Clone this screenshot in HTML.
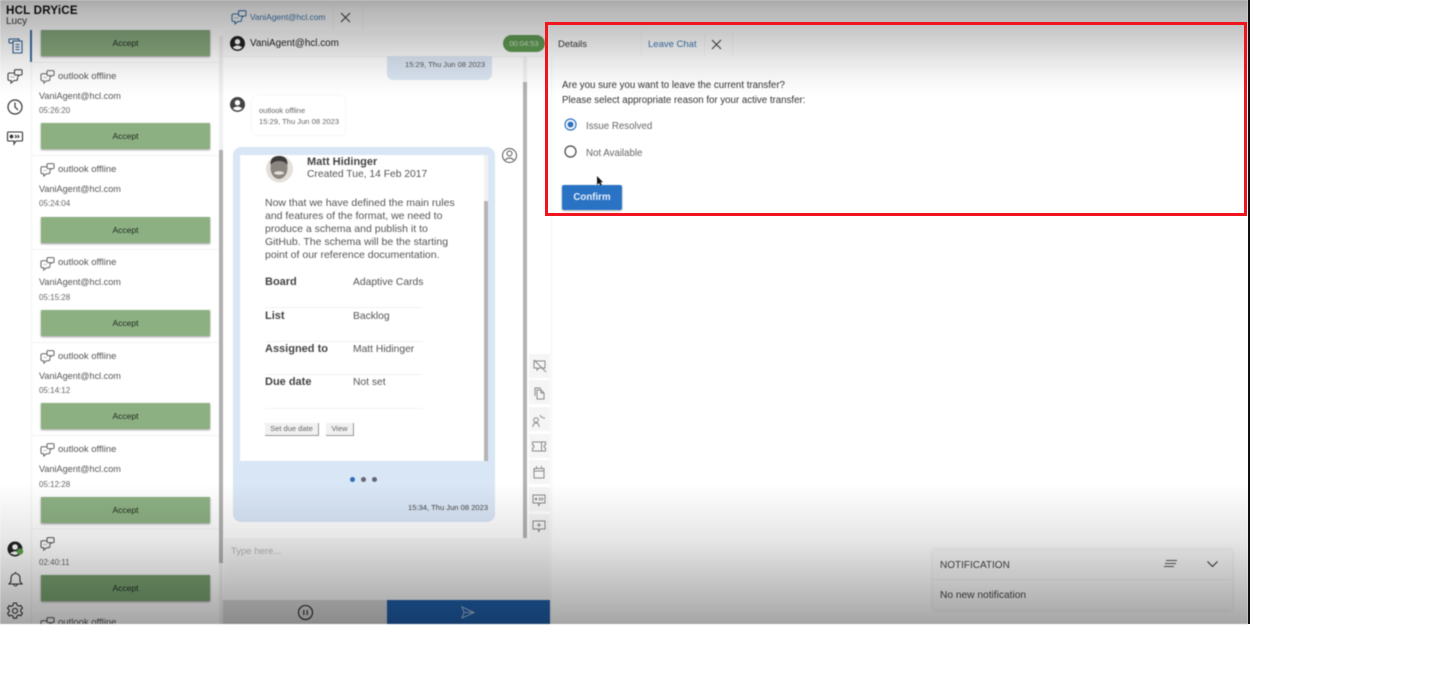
<!DOCTYPE html>
<html><head><meta charset="utf-8"><style>
html,body{margin:0;padding:0;background:#fff}
body{width:1431px;height:679px;overflow:hidden;position:relative;font-family:"Liberation Sans",sans-serif;color:#333}
#app{position:absolute;left:0;top:0;width:1248px;height:624px;overflow:hidden;background:#fff;filter:blur(.5px)}
.a{position:absolute;white-space:nowrap}
.t1{font-size:9.5px;color:#555}
.t2{font-size:9.1px;color:#555}
.t3{font-size:8px;color:#666}
.acc{position:absolute;left:41px;width:169px;height:26px;background:#8db083;box-shadow:0 1px 2px rgba(0,0,0,.4);font-size:8.5px;color:#1e2b1e;text-align:center;line-height:27px}
.sep{position:absolute;left:32px;width:187px;height:1px;background:#f3f3f3}
svg{position:absolute;overflow:visible;fill:none}
.tb{position:absolute;left:529px;width:21px;height:24px;background:#f5f5f6}
.card{font-size:10.5px;color:#555}
.v{font-size:10.3px}
.b{font-size:11px;font-weight:bold;color:#444}
.hr{position:absolute;left:265px;width:158px;height:1px;background:#f2f2f2}
.mini{position:absolute;top:423px;height:12px;background:#f1f1f1;border-right:1px solid #999;border-bottom:1px solid #999;font-size:7.5px;color:#666;line-height:12px;text-align:center}
</style></head><body>
<svg width="0" height="0" style="position:absolute"><defs>
<symbol id="chat" viewBox="0 0 16 15"><path d="M7 4H2.500Q1 4 1 5.500V10Q1 11.500 2.500 11.500H4V14L7 11.500H9Q10.500 11.500 10.500 10V8.500" stroke="currentColor" stroke-width="1.100" fill="none"/><path d="M7.500 1.500Q7.500 .7 8.500 .7H14Q15 .7 15 1.700V5Q15 6 14 6H12.500L11 7.500V6H8.500Q7.500 6 7.500 5Z" stroke="currentColor" stroke-width="1.100" fill="none"/><path d="M4 8h.8M6 8h.8" stroke="currentColor"/></symbol>
</defs></svg>
<div id="app">
<!-- header/logo -->
<div class="a" style="left:6px;top:4px;font-size:11.6px;font-weight:bold;color:#111;letter-spacing:.2px">HCL DRYiCE</div>
<div class="a" style="left:6px;top:16px;font-size:10px;color:#333">Lucy</div>
<div class="a" style="left:31px;top:30px;width:1px;height:594px;background:#f2f2f2"></div>
<div class="a" style="left:30px;top:30px;width:2px;height:32px;background:#3c6a9c"></div>
<!-- nav icons -->
<svg style="left:8px;top:38px" width="15" height="16" viewBox="0 0 15 16" stroke="#2a5f96" stroke-width="1.100"><path d="M1 1h10v2M5 3h9v12H5zM1 1v3q0 1 1 1h3M7.500 6.500h4M7.500 9h4M7.500 11.500h4"/></svg>
<svg style="left:7px;top:69px;color:#444" width="16" height="15"><use href="#chat"/></svg>
<svg style="left:7px;top:99px" width="16" height="16" viewBox="0 0 16 16" stroke="#333" stroke-width="1.200"><circle cx="8" cy="8" r="7"/><path d="M8 3.500V8l3 3"/></svg>
<svg style="left:7px;top:131px" width="16" height="15" viewBox="0 0 16 15" stroke="#333" stroke-width="1.100"><path d="M1.500 1h13q1 0 1 1v7q0 1-1 1H9l-2 3v-3H1.500q-1 0-1-1V2q0-1 1-1z"/><circle cx="4.500" cy="5.500" r="1.300" fill="#333"/><path d="M8 4l1.500 1.500L8 7M10.500 4L12 5.500 10.500 7"/></svg>
<svg style="left:7px;top:541px" width="16" height="16" viewBox="0 0 16 16"><circle cx="8" cy="8" r="7.500" fill="#222"/><circle cx="8" cy="6" r="2.800" fill="#fff"/><path d="M3 12.500Q8 8 13 12.500L8 14z" fill="#fff"/><circle cx="13" cy="10.500" r="3.200" fill="#5da14d"/></svg>
<svg style="left:8px;top:571px" width="15" height="17" viewBox="0 0 15 17" stroke="#333" stroke-width="1.100"><path d="M1 13h13l-2-2.500V7A4.500 4.500 0 0 0 3 7v3.500zM7.500 1v1.500M5.500 13.500q2 3 4 0"/></svg>
<svg style="left:7px;top:602px" width="16" height="17" viewBox="0 0 16 17" stroke="#333" stroke-width="1.100"><path d="M6.500 1h3l.5 2.200 1.800 1 2.100-.7 1.500 2.600-1.600 1.500v2l1.600 1.500-1.500 2.600-2.100-.7-1.800 1-.5 2.200h-3L6 14.200l-1.800-1-2.100.7L.6 11.300l1.600-1.500v-2L.6 6.300l1.500-2.600 2.100.7 1.800-1z"/><circle cx="8" cy="8.800" r="2.500"/></svg>

<!-- left list -->
<div class="acc" style="top:30px;height:26px;background:#86a87d">Accept</div>
<div class="sep" style="top:62px"></div>
<svg style="left:40px;top:70px;color:#666" width="15" height="14"><use href="#chat"/></svg>
<div class="a t1" style="left:58px;top:71px">outlook offline</div>
<div class="a t2" style="left:39px;top:91px">VaniAgent@hcl.com</div>
<div class="a t3" style="left:39px;top:106px">05:26:20</div>
<div class="acc" style="top:123px">Accept</div>
<div class="sep" style="top:155px"></div>
<svg style="left:40px;top:163px;color:#666" width="15" height="14"><use href="#chat"/></svg>
<div class="a t1" style="left:58px;top:164px">outlook offline</div>
<div class="a t2" style="left:39px;top:184px">VaniAgent@hcl.com</div>
<div class="a t3" style="left:39px;top:199px">05:24:04</div>
<div class="acc" style="top:217px">Accept</div>
<div class="sep" style="top:249px"></div>
<svg style="left:40px;top:257px;color:#666" width="15" height="14"><use href="#chat"/></svg>
<div class="a t1" style="left:58px;top:257px">outlook offline</div>
<div class="a t2" style="left:39px;top:277px">VaniAgent@hcl.com</div>
<div class="a t3" style="left:39px;top:293px">05:15:28</div>
<div class="acc" style="top:310px">Accept</div>
<div class="sep" style="top:342px"></div>
<svg style="left:40px;top:350px;color:#666" width="15" height="14"><use href="#chat"/></svg>
<div class="a t1" style="left:58px;top:351px">outlook offline</div>
<div class="a t2" style="left:39px;top:371px">VaniAgent@hcl.com</div>
<div class="a t3" style="left:39px;top:386px">05:14:12</div>
<div class="acc" style="top:403px">Accept</div>
<div class="sep" style="top:435px"></div>
<svg style="left:40px;top:443px;color:#666" width="15" height="14"><use href="#chat"/></svg>
<div class="a t1" style="left:58px;top:444px">outlook offline</div>
<div class="a t2" style="left:39px;top:464px">VaniAgent@hcl.com</div>
<div class="a t3" style="left:39px;top:480px">05:12:28</div>
<div class="acc" style="top:497px">Accept</div>
<div class="sep" style="top:528px"></div>
<svg style="left:40px;top:537px;color:#555" width="15" height="14"><use href="#chat"/></svg>
<div class="a t3" style="left:39px;top:558px">02:40:11</div>
<div class="acc" style="top:575px;background:#78a070">Accept</div>
<svg style="left:40px;top:617px;color:#555" width="15" height="14"><use href="#chat"/></svg>
<div class="a t1" style="left:58px;top:617px">outlook offline</div>
<div class="a" style="left:219px;top:36px;width:4px;height:588px;background:#f0f0f0"></div>
<div class="a" style="left:219px;top:150px;width:4px;height:413px;background:#b0b0b0"></div>

<!-- chat tab -->
<svg style="left:231px;top:10px;color:#3f78b0" width="16" height="15"><use href="#chat"/></svg>
<div class="a" style="left:250px;top:12px;font-size:8.4px;color:#3f78b0">VaniAgent@hcl.com</div>
<div class="a" style="left:333px;top:6px;width:28px;height:24px;border-left:1px solid #f2f2f2;border-right:1px solid #f2f2f2"></div>
<svg style="left:341px;top:13px" width="9" height="9" stroke="#444" stroke-width="1.100"><path d="M0 0l9 9M9 0L0 9"/></svg>
<div class="a" style="left:223px;top:31px;width:322px;height:25px;background:#fcfcfc;box-shadow:0 1px 1px rgba(0,0,0,.05)"></div>
<svg style="left:230px;top:36px" width="15" height="15" viewBox="0 0 15 15"><circle cx="7.500" cy="7.500" r="7.500" fill="#222"/><circle cx="7.500" cy="5.700" r="2.700" fill="#fff"/><path d="M2.800 11.500Q7.500 7.500 12.200 11.500Q7.500 15.500 2.800 11.500z" fill="#fff"/></svg>
<div class="a" style="left:250px;top:38px;font-size:9.900px;color:#222">VaniAgent@hcl.com</div>
<div class="a" style="left:503px;top:35px;width:42px;height:17px;border-radius:9px;background:#5f9a53;color:#cfe2ca;font-size:7.500px;text-align:center;line-height:17px">00:04:53</div>

<!-- chat area -->
<div class="a" style="left:523px;top:56px;width:4px;height:482px;background:#f2f2f2"></div>
<div class="a" style="left:523px;top:82px;width:4px;height:456px;background:#b2b2b2"></div>
<div class="a" style="left:387px;top:56px;width:105px;height:24px;background:#dbe6f3;border-radius:0 0 6px 6px"></div>
<div class="a" style="left:405px;top:60px;font-size:7.600px;color:#555">15:29, Thu Jun 08 2023</div>
<svg style="left:230px;top:97px" width="15" height="15" viewBox="0 0 15 15"><circle cx="7.500" cy="7.500" r="7.500" fill="#444"/><circle cx="7.500" cy="5.700" r="2.700" fill="#fff"/><path d="M2.800 11.500Q7.500 7.500 12.200 11.500Q7.500 15.500 2.800 11.500z" fill="#fff"/></svg>
<div class="a" style="left:252px;top:96px;width:93px;height:39px;background:#fff;border-radius:5px;box-shadow:0 0 3px rgba(0,0,0,.08)"></div>
<div class="a" style="left:259px;top:106px;font-size:7.500px;color:#666">outlook offline</div>
<div class="a" style="left:259px;top:117px;font-size:7.600px;color:#666">15:29, Thu Jun 08 2023</div>

<div class="a" style="left:233px;top:147px;width:262px;height:375px;background:#d9e6f6;border-radius:8px"></div>
<div class="a" style="left:240px;top:155px;width:248px;height:306px;background:#fff"></div>
<div class="a" style="left:484px;top:155px;width:4px;height:306px;background:#f2f2f2"></div>
<div class="a" style="left:484px;top:201px;width:4px;height:260px;background:#b5b5b5"></div>
<svg style="left:502px;top:148px" width="15" height="15" viewBox="0 0 15 15" stroke="#555" stroke-width="1"><circle cx="7.500" cy="7.500" r="7"/><circle cx="7.500" cy="5.500" r="2.500"/><path d="M3 12q4.500-4 9 0"/></svg>
<svg style="left:266px;top:155px" width="27" height="28" viewBox="0 0 27 28"><circle cx="13.500" cy="14" r="13.500" fill="#e2e0d8"/><ellipse cx="13" cy="13" rx="8.500" ry="11" fill="#8b8580"/><path d="M4.500 10Q4 1 13 1T21.500 10Q19 6 13 6T4.500 10z" fill="#3c3a38"/><ellipse cx="13" cy="18" rx="5" ry="1.800" fill="#e2e0da"/></svg>
<div class="a card b" style="left:307px;top:156px">Matt Hidinger</div>
<div class="a card v" style="left:307px;top:169px">Created Tue, 14 Feb 2017</div>
<div class="a card" style="left:265px;top:197px;line-height:13px">Now that we have defined the main rules<br>and features of the format, we need to<br>produce a schema and publish it to<br>GitHub. The schema will be the starting<br>point of our reference documentation.</div>
<div class="a card b" style="left:265px;top:276px">Board</div><div class="a card v" style="left:353px;top:277px">Adaptive Cards</div>
<div class="hr" style="top:307px"></div>
<div class="a card b" style="left:265px;top:310px">List</div><div class="a card v" style="left:353px;top:311px">Backlog</div>
<div class="hr" style="top:341px"></div>
<div class="a card b" style="left:265px;top:343px">Assigned to</div><div class="a card v" style="left:353px;top:344px">Matt Hidinger</div>
<div class="hr" style="top:374px"></div>
<div class="a card b" style="left:265px;top:376px">Due date</div><div class="a card v" style="left:353px;top:377px">Not set</div>
<div class="hr" style="top:408px"></div>
<div class="mini" style="left:265px;width:53px">Set due date</div>
<div class="mini" style="left:326px;width:27px">View</div>
<div class="a" style="left:350px;top:477px;width:5px;height:5px;border-radius:50%;background:#2f6cb4"></div>
<div class="a" style="left:361px;top:477px;width:5px;height:5px;border-radius:50%;background:#667"></div>
<div class="a" style="left:372px;top:477px;width:5px;height:5px;border-radius:50%;background:#667"></div>
<div class="a" style="left:408px;top:503px;font-size:7.600px;color:#444">15:34, Thu Jun 08 2023</div>

<!-- side toolbar -->
<div class="tb" style="top:354px"></div><div class="tb" style="top:380px"></div><div class="tb" style="top:407px"></div><div class="tb" style="top:434px"></div><div class="tb" style="top:460px"></div><div class="tb" style="top:487px"></div><div class="tb" style="top:514px"></div>
<svg style="left:533px;top:360px" width="13" height="12" viewBox="0 0 13 12" stroke="#888" stroke-width="1"><path d="M1 1h11v7H6l-2 2V8H1zM1 0l12 12"/></svg>
<svg style="left:534px;top:387px" width="11" height="13" viewBox="0 0 11 13" stroke="#888" stroke-width="1"><path d="M1 9V1h5l1 1M3 3h4l3 3v6H3zM7 3v3h3"/></svg>
<svg style="left:532px;top:413px" width="14" height="14" viewBox="0 0 14 14" stroke="#888" stroke-width="1"><circle cx="4" cy="7" r="2.300"/><path d="M1 14q0-4 3-4t3 4M8 2q1 3 5 3"/></svg>
<svg style="left:532px;top:441px" width="14" height="11" viewBox="0 0 14 11" stroke="#888" stroke-width="1"><path d="M.5 1h13v3a1.500 1.500 0 0 0 0 3v3H.5V7a1.500 1.500 0 0 0 0-3zM9.500 1v9"/></svg>
<svg style="left:533px;top:466px" width="12" height="13" viewBox="0 0 12 13" stroke="#888" stroke-width="1"><path d="M1 2.500h10V12H1zM1 5h10M3.500 0v3M8.500 0v3"/></svg>
<svg style="left:532px;top:494px" width="14" height="13" viewBox="0 0 14 13" stroke="#888" stroke-width="1"><path d="M1 1h12v8H8l-1.500 3V9H1z"/><circle cx="4" cy="5" r=".8" fill="#888"/><path d="M7 3.500L8.500 5 7 6.500M9.500 3.500L11 5 9.500 6.500"/></svg>
<svg style="left:532px;top:520px" width="14" height="14" viewBox="0 0 14 14" stroke="#888" stroke-width="1"><path d="M1 1h12v8H8l-1.500 3V9H1zM7 3v4M5 5h4"/></svg>

<!-- input -->
<div class="a" style="left:224px;top:538px;width:326px;height:62px;background:#f6f6f6"></div>
<div class="a" style="left:231px;top:546px;font-size:9.500px;color:#b5b5b5">Type here...</div>
<div class="a" style="left:223px;top:600px;width:164px;height:24px;background:#d6d6d6"></div>
<svg style="left:298px;top:605px" width="15" height="15" viewBox="0 0 15 15" stroke="#222" stroke-width="1.100"><circle cx="7.500" cy="7.500" r="7"/><path d="M5.800 5v5M9.200 5v5"/></svg>
<div class="a" style="left:387px;top:600px;width:163px;height:24px;background:#1f5ea8"></div>
<svg style="left:461px;top:606px" width="14" height="13" viewBox="0 0 14 13" stroke="#9db8d8" stroke-width="1"><path d="M1 1l12 5.500L1 12l2-5.500zM3 6.500h10"/></svg>

<!-- details panel -->
<div class="a" style="left:551px;top:30px;width:90px;height:27px;border-right:1px solid #f6f6f6"></div>
<div class="a" style="left:551px;top:56px;width:1px;height:568px;background:#f4f4f4"></div>
<div class="a" style="left:558px;top:39px;font-size:9.500px;color:#333">Details</div>
<div class="a" style="left:648px;top:39px;font-size:9.500px;color:#3f78b0">Leave Chat</div>
<div class="a" style="left:704px;top:32px;width:27px;height:25px;border-left:1px solid #f6f6f6;border-right:1px solid #f6f6f6"></div>
<svg style="left:712px;top:40px" width="9" height="9" stroke="#444" stroke-width="1.100"><path d="M0 0l9 9M9 0L0 9"/></svg>
<div class="a" style="left:562px;top:78px;font-size:9.700px;line-height:15px;color:#333">Are you sure you want to leave the current transfer?<br>Please select appropriate reason for your active transfer:</div>
<svg style="left:564px;top:118px" width="13" height="13" viewBox="0 0 13 13"><circle cx="6.500" cy="6.500" r="5.500" stroke="#2f72c0" stroke-width="1.200"/><circle cx="6.500" cy="6.500" r="3" fill="#2f72c0"/></svg>
<div class="a" style="left:586px;top:120.500px;font-size:9.700px;color:#666">Issue Resolved</div>
<svg style="left:564px;top:145px" width="13" height="13" viewBox="0 0 13 13"><circle cx="6.500" cy="6.500" r="5.500" stroke="#444" stroke-width="1.200"/></svg>
<div class="a" style="left:586px;top:147.500px;font-size:9.700px;color:#666">Not Available</div>
<svg style="left:596px;top:176px" width="8" height="12" viewBox="0 0 8 12"><path d="M1 0v9l2-2 2 4 1.500-.7-2-4H7z" fill="#111"/></svg>
<div class="a" style="left:562px;top:185px;width:60px;height:25px;background:#2a72c4;border-radius:2px;color:#e6f0fb;font-size:9.700px;font-weight:bold;text-align:center;line-height:26px;box-shadow:0 1px 2px rgba(0,0,0,.3)">Confirm</div>

<!-- notification -->
<div class="a" style="left:933px;top:550px;width:299px;height:60px;background:#fbfbfb;box-shadow:0 0 4px rgba(0,0,0,.12)"></div>
<div class="a" style="left:933px;top:579px;width:299px;height:1px;background:#f0f0f0"></div>
<div class="a" style="left:940px;top:559.500px;font-size:10px;color:#444">NOTIFICATION</div>
<div class="a" style="left:940px;top:590px;font-size:10.200px;color:#444">No new notification</div>
<svg style="left:1164px;top:560px" width="13" height="8" stroke="#555" stroke-width="1"><path d="M2 .5h11M1 3.500h11M0 6.500h10"/></svg>
<svg style="left:1207px;top:561px" width="11" height="7" stroke="#333" stroke-width="1.100"><path d="M.5.5L5.500 5.500 10.500.5"/></svg>

<!-- video-style gradients -->
<div class="a" style="left:0;top:0;width:1248px;height:96px;background:linear-gradient(#a8a8a8 0,#b8b8b8 10px,#c0c0c0 22px,#d2d2d2 40px,#e7e7e7 60px,#f7f7f7 80px,#fff 96px);mix-blend-mode:multiply"></div>
<div class="a" style="left:0;top:484px;width:1248px;height:140px;background:linear-gradient(#fff,#e6e6e6 40%,#a6a6a6);mix-blend-mode:multiply"></div>
</div>
<!-- red frame & black edge -->
<div class="a" style="left:545px;top:22px;width:702px;height:194px;box-sizing:border-box;border:3.500px solid #f0141e;filter:blur(.3px)"></div>
<div class="a" style="left:1248px;top:0;width:2px;height:624px;background:#111"></div>
</body></html>
